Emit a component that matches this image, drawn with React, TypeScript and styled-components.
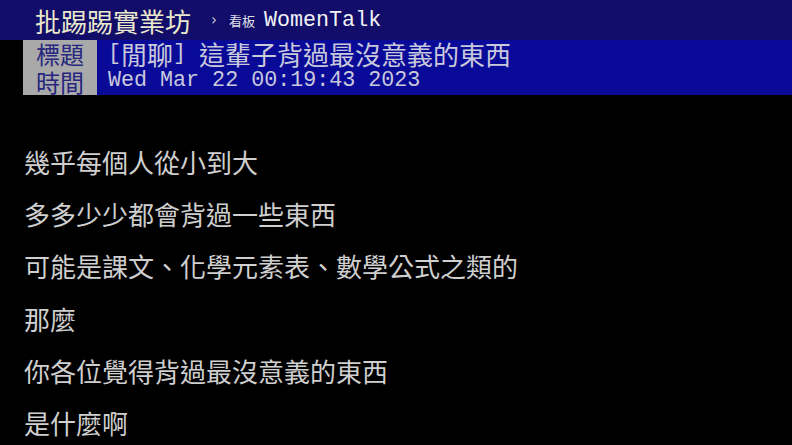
import React from "react";
import styled, { createGlobalStyle } from "styled-components";

const GlobalStyle = createGlobalStyle`
  html, body {
    margin: 0;
    padding: 0;
    background: #000;
  }
  body {
    font-family: "Noto Sans CJK TC", "Noto Sans CJK SC", sans-serif;
  }
`;

const headerRows = [
  { label: "標題", parts: [{ mono: true, text: "[" }, { mono: false, text: "閒聊" }, { mono: true, text: "] " }, { mono: false, text: "這輩子背過最沒意義的東西" }] },
  { label: "時間", parts: [{ mono: true, text: "Wed Mar 22 00:19:43 2023" }] },
];

const lines = [
  "幾乎每個人從小到大",
  "多多少少都會背過一些東西",
  "可能是課文、化學元素表、數學公式之類的",
  "那麼",
  "你各位覺得背過最沒意義的東西",
  "是什麼啊",
];

const App = () => {
  return (
    <>
      <GlobalStyle />
      <Page>
        <TopBar>
          <SiteName>批踢踢實業坊</SiteName>
          <Chevron>›</Chevron>
          <BoardTag>看板</BoardTag>
          <BoardName>WomenTalk</BoardName>
        </TopBar>
        <Meta>
          {headerRows.map((row) => (
            <MetaRow key={row.label}>
              <MetaLabel>{row.label}</MetaLabel>
              <MetaValue>
                {row.parts.map((p, i) =>
                  p.mono ? <Mono key={i}>{p.text}</Mono> : <Wide key={i}>{p.text}</Wide>
                )}
              </MetaValue>
            </MetaRow>
          ))}
        </Meta>
        <Body>
          {lines.map((line) => (
            <Line key={line}>{line}</Line>
          ))}
        </Body>
      </Page>
    </>
  );
};

const Page = styled.div`
  width: 792px;
  height: 445px;
  overflow: hidden;
  background: #000;
`;

const TopBar = styled.div`
  height: 40px;
  background: #110d68;
  display: flex;
  align-items: center;
  padding-left: 35px;
`;

const SiteName = styled.div`
  font-size: 26px;
  color: #ebe9cc;
  line-height: 1;
  margin-top: 2px;
`;

const Chevron = styled.span`
  margin-left: 20px;
  font-family: "DejaVu Sans", sans-serif;
  font-size: 15px;
  color: #c8c8d8;
`;

const BoardTag = styled.span`
  margin-left: 12px;
  font-size: 13px;
  color: #e0e0e8;
`;

const BoardName = styled.span`
  margin-left: 9px;
  font-family: "Liberation Mono", monospace;
  font-size: 21.7px;
  color: #f2f2f6;
`;

const Meta = styled.div`
  display: flex;
  flex-direction: column;
  padding-left: 23px;
`;

const MetaRow = styled.div`
  display: flex;
  height: 27.5px;
`;

const MetaLabel = styled.div`
  width: 74px;
  background: #a9a9a9;
  color: #26267e;
  font-size: 24px;
  line-height: 27.5px;
  text-align: center;
`;

const MetaValue = styled.div`
  flex: 1;
  display: flex;
  align-items: center;
  background: #0a0a98;
  color: #c9c9dc;
  padding-left: 11px;
  white-space: pre;
`;

const Wide = styled.span`
  font-size: 26px;
  line-height: 1;
`;

const Mono = styled.span`
  font-family: "Liberation Mono", monospace;
  font-size: 21.7px;
  line-height: 1;
`;

const Body = styled.div`
  padding: 41px 0 0 24px;
  display: flex;
  flex-direction: column;
`;

const Line = styled.div`
  font-size: 26px;
  line-height: 52.2px;
  height: 52.2px;
  color: #cfcfcf;
  white-space: nowrap;
`;

export default App;
